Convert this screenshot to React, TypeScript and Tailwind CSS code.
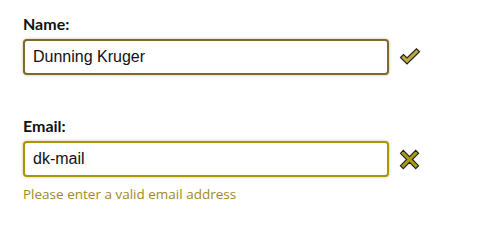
import React from 'react';

const CheckIcon = () => (
  <svg width="22" height="18" viewBox="0 0 22 18" className="shrink-0">
    <path
      d="M1.5 9.5 L4.5 6.5 L8 10 L17.5 0.8 L20.5 3.8 L8 16 Z"
      fill="#bfa93f"
      stroke="#222"
      strokeWidth="1.2"
      strokeLinejoin="miter"
    />
  </svg>
);

const CrossIcon = () => (
  <svg width="21" height="21" viewBox="0 0 22 22" className="shrink-0">
    <path
      d="M1.5 4.5 L4.5 1.5 L11 8 L17.5 1.5 L20.5 4.5 L14 11 L20.5 17.5 L17.5 20.5 L11 14 L4.5 20.5 L1.5 17.5 L8 11 Z"
      fill="#a89a12"
      stroke="#222"
      strokeWidth="1.2"
    />
  </svg>
);

interface FieldProps {
  label: string;
  value: string;
  borderClass: string;
  icon: React.ReactNode;
  error?: string;
}

const Field: React.FC<FieldProps> = ({ label, value, borderClass, icon, error }) => (
  <div className="flex flex-col">
    <label className="text-[16px] font-bold leading-[20px] text-[#111] font-['Lato','Open_Sans',sans-serif]">
      {label}
    </label>
    <div className="flex items-center gap-[10px] mt-[5px]">
      <input
        readOnly
        value={value}
        className={`w-[366px] h-[36px] border-2 ${borderClass} rounded-[4px] px-[8px] text-[16px] text-[#111] bg-white shadow-[0_0_3px_rgba(120,100,40,0.45)] outline-none font-['Liberation_Sans',Arial,sans-serif]`}
      />
      {icon}
    </div>
    {error && (
      <div className="mt-[8px] text-[13.5px] leading-[18px] text-[#a08b22] font-['Open_Sans','Noto_Sans',sans-serif]">
        {error}
      </div>
    )}
  </div>
);

export default function App() {
  return (
    <div className="w-[480px] h-[228px] bg-white pl-[23px] pt-[14px] flex flex-col gap-[41px]">
      <Field
        label="Name:"
        value="Dunning Kruger"
        borderClass="border-[#7b6a2b]"
        icon={<CheckIcon />}
      />
      <Field
        label="Email:"
        value="dk-mail"
        borderClass="border-[#a89700]"
        icon={<CrossIcon />}
        error="Please enter a valid email address"
      />
    </div>
  );
}
